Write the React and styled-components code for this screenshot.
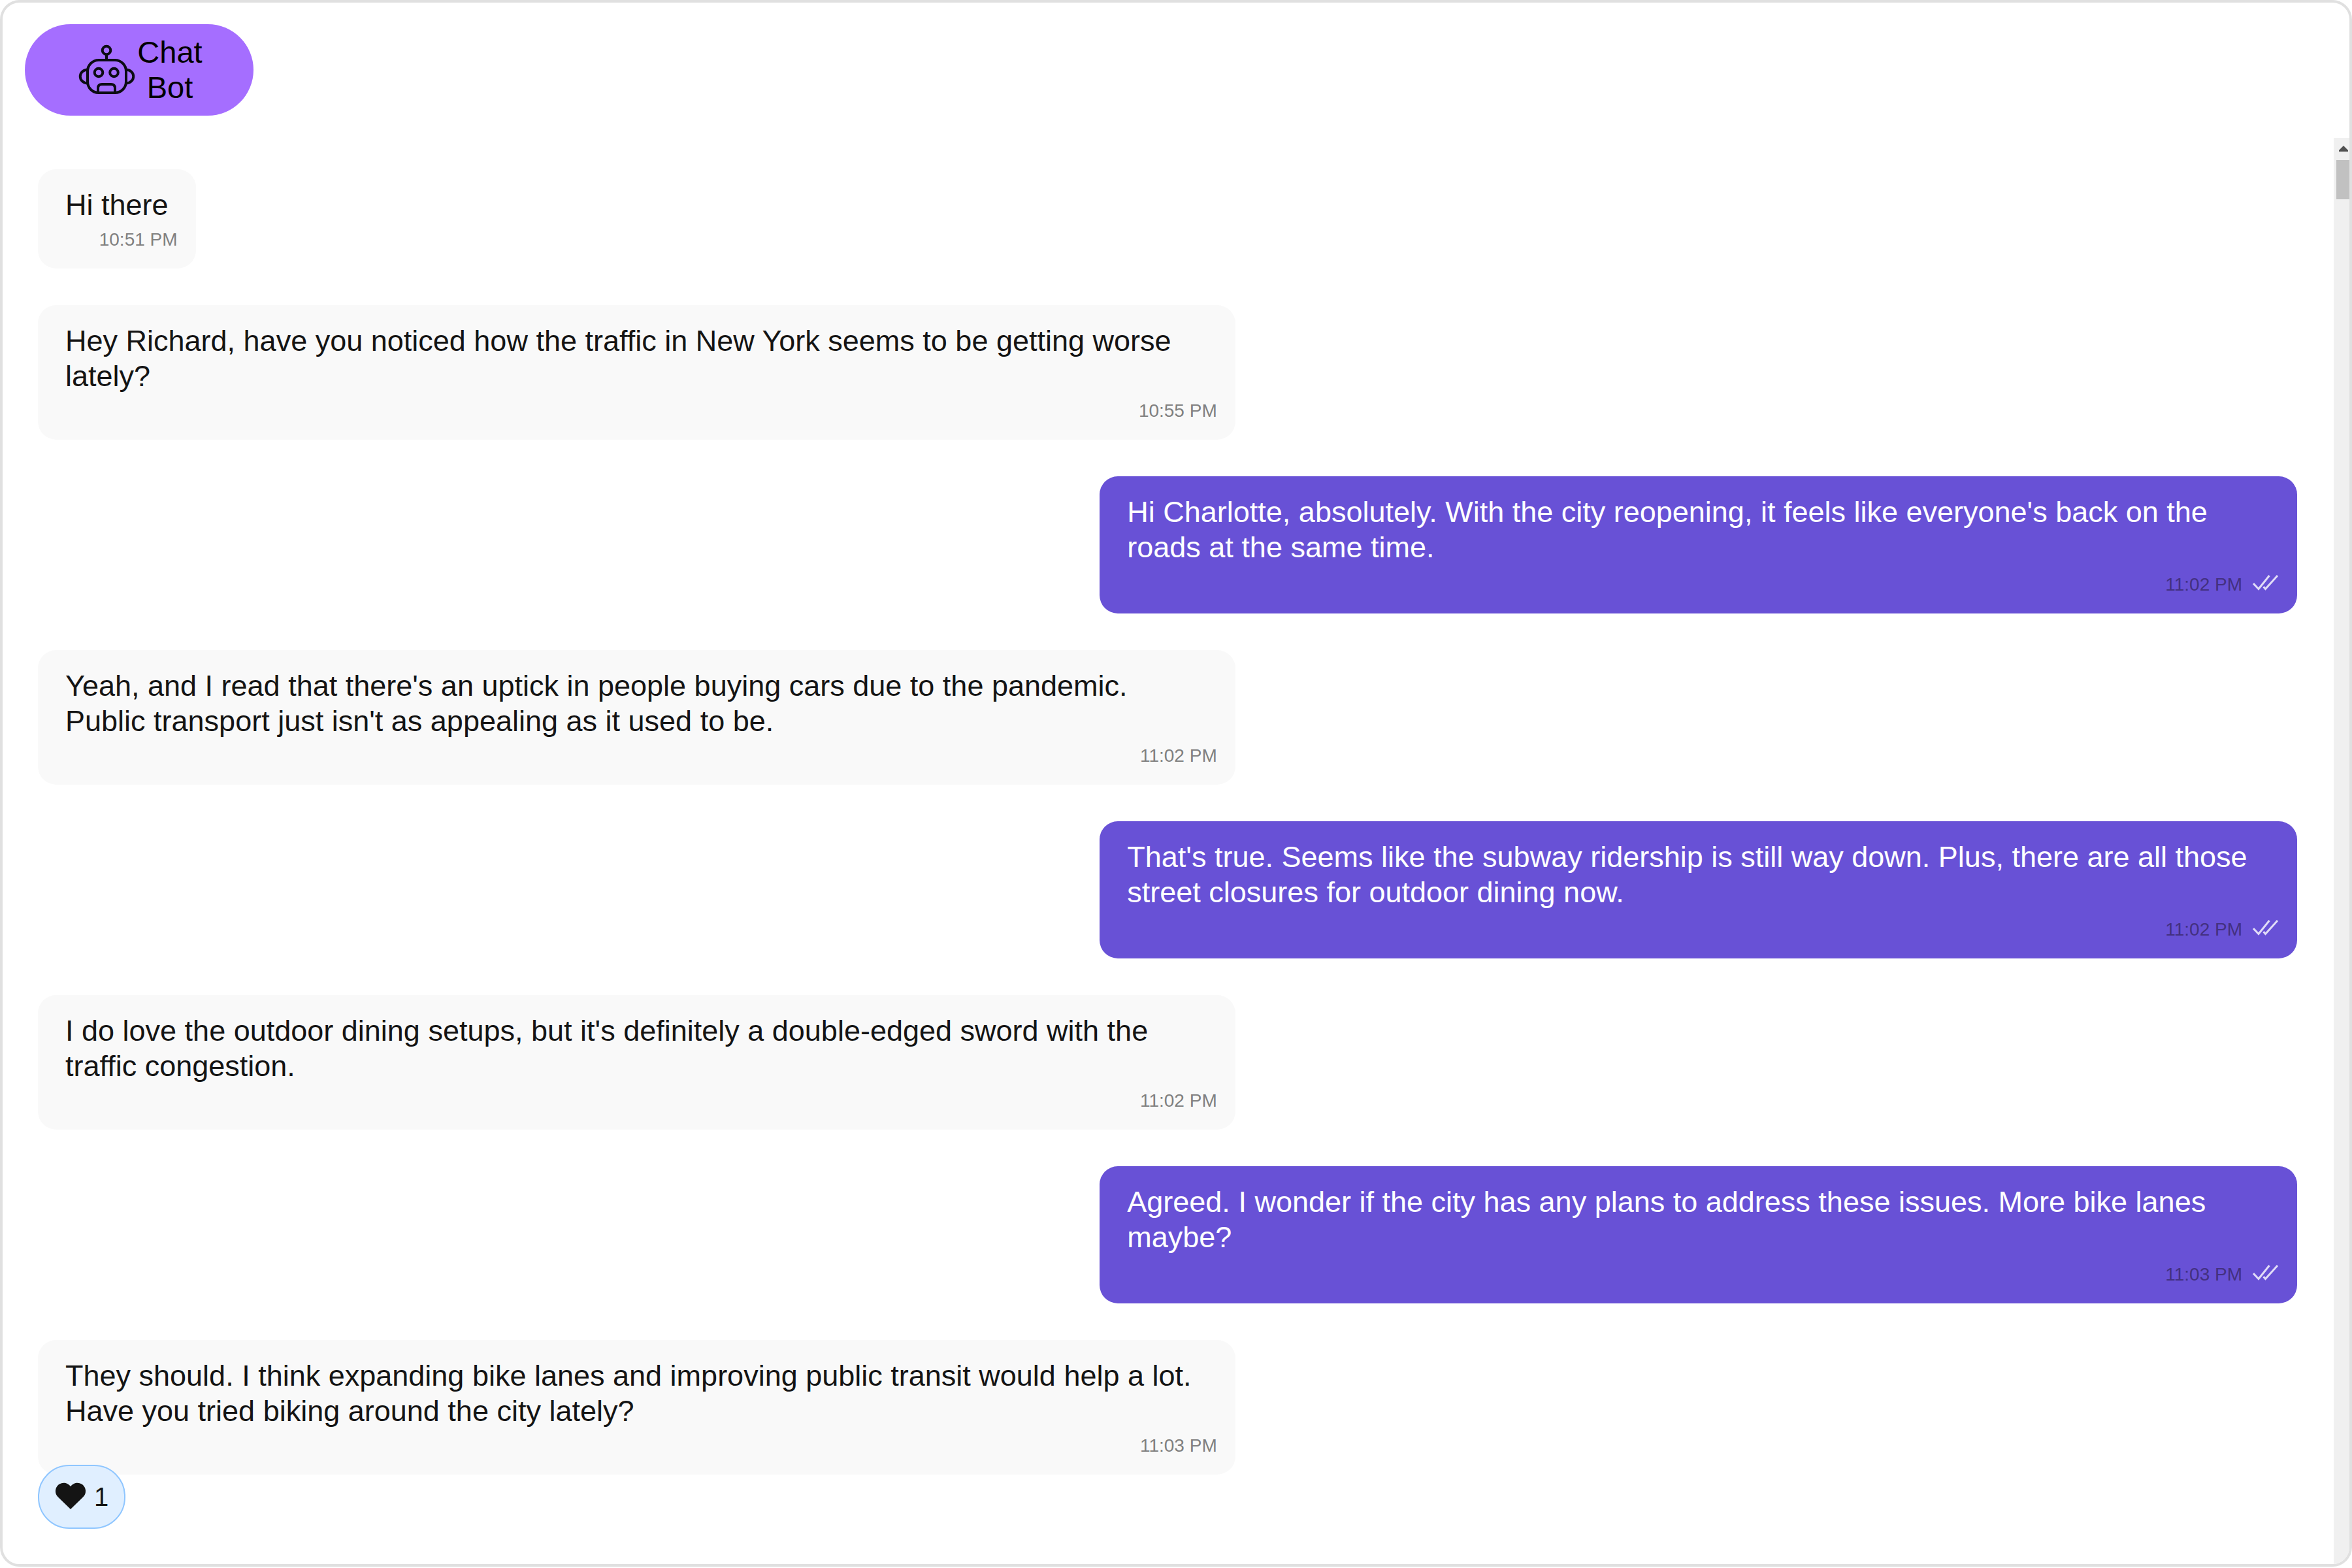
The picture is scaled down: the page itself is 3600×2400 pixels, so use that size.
import React from "react";
import styled, { createGlobalStyle } from "styled-components";

const GlobalStyle = createGlobalStyle`
  *, *::before, *::after { box-sizing: border-box; }
  body {
    margin: 0;
    background: #ffffff;
    font-family: "Liberation Sans", Arial, sans-serif;
  }
`;

const Window = styled.main`
  display: flex;
  flex-direction: column;
  height: calc(100vh - 2px);
  border: 4px solid #e0e0e0;
  border-radius: 30px;
  background: #ffffff;
  overflow: hidden;
`;

const Header = styled.header`
  display: flex;
  flex: none;
  padding: 33px 34px 34px;
`;

const BotButton = styled.button`
  display: flex;
  align-items: center;
  justify-content: center;
  gap: 2px;
  width: 350px;
  padding: 16px 78px 16px 80px;
  border: 0;
  border-radius: 72px;
  background: #a56eff;
  color: #000000;
  font: inherit;
  font-size: 47px;
  line-height: 54px;
  text-align: center;
  cursor: pointer;
`;

const RobotIcon = styled.svg`
  flex: none;
  width: 90px;
  height: 90px;
  fill: none;
  stroke: #0c0c14;
  stroke-width: 4;
`;

const Body = styled.div`
  display: flex;
  flex: 1;
  min-height: 0;
`;

const MessageList = styled.ol`
  display: flex;
  flex: 1;
  flex-direction: column;
  gap: 56px;
  min-width: 0;
  margin: 0;
  padding: 48px 56px 48px 54px;
  list-style: none;
  overflow: hidden;
`;

const MessageItem = styled.li`
  display: flex;
  flex: none;
  flex-direction: column;
  align-items: ${({ $own }) => ($own ? "flex-end" : "flex-start")};
`;

const Bubble = styled.article`
  display: flex;
  flex-direction: column;
  gap: 10px;
  max-width: 53%;
  padding: 28px;
  border-radius: 28px;
  background: ${({ $own }) => ($own ? "#6851d6" : "#f9f9f9")};
  color: ${({ $own }) => ($own ? "#ffffff" : "#141414")};
`;

const MessageText = styled.p`
  margin: 0;
  padding: 0 14px;
  font-size: 45px;
  line-height: 54px;
`;

const Meta = styled.footer`
  display: flex;
  align-items: flex-end;
  justify-content: flex-end;
  gap: 16px;
  height: ${({ $own }) => ($own ? "36px" : "32px")};
`;

const Time = styled.time`
  color: ${({ $own }) => ($own ? "#433080" : "#808080")};
  font-size: 28px;
  line-height: 32px;
`;

const ReadIcon = styled.svg`
  align-self: flex-start;
  width: 40px;
  height: 30px;
  fill: none;
  stroke: #e1dcf7;
  stroke-width: 3;
`;

const Reaction = styled.button`
  display: flex;
  align-items: center;
  gap: 12px;
  height: 98px;
  margin-top: -15px;
  padding: 0 24px;
  border: 2px solid #8fc6ff;
  border-radius: 48px;
  background: #e0efff;
  color: #141414;
  font: inherit;
  font-size: 40px;
  line-height: 46px;
  cursor: pointer;
`;

const HeartIcon = styled.svg`
  flex: none;
  width: 48px;
  height: 44px;
  fill: #141414;
`;

const Scrollbar = styled.div`
  display: flex;
  flex: none;
  flex-direction: column;
  align-items: stretch;
  gap: 12px;
  width: 24px;
  padding: 12px 0 0 4px;
  background: #f0f0f0;
`;

const ScrollArrow = styled.svg`
  width: 14px;
  height: 10px;
  margin-left: 4px;
  fill: #505050;
`;

const ScrollThumb = styled.div`
  height: 60px;
  background: #c1c1c1;
`;

const messages = [
  { text: "Hi there", time: "10:51 PM" },
  {
    text: "Hey Richard, have you noticed how the traffic in New York seems to be getting worse lately?",
    time: "10:55 PM",
  },
  {
    own: true,
    text: "Hi Charlotte, absolutely. With the city reopening, it feels like everyone's back on the roads at the same time.",
    time: "11:02 PM",
  },
  {
    text: "Yeah, and I read that there's an uptick in people buying cars due to the pandemic. Public transport just isn't as appealing as it used to be.",
    time: "11:02 PM",
  },
  {
    own: true,
    text: "That's true. Seems like the subway ridership is still way down. Plus, there are all those street closures for outdoor dining now.",
    time: "11:02 PM",
  },
  {
    text: "I do love the outdoor dining setups, but it's definitely a double-edged sword with the traffic congestion.",
    time: "11:02 PM",
  },
  {
    own: true,
    text: "Agreed. I wonder if the city has any plans to address these issues. More bike lanes maybe?",
    time: "11:03 PM",
  },
  {
    text: "They should. I think expanding bike lanes and improving public transit would help a lot. Have you tried biking around the city lately?",
    time: "11:03 PM",
    likes: 1,
  },
];

function Robot() {
  return (
    <RobotIcon viewBox="0 0 90 90" aria-hidden="true">
      <circle cx="45" cy="15" r="6.300" />
      <path d="M45 21v9" />
      <rect x="16" y="30" width="59" height="50" rx="17" />
      <circle cx="33" cy="49" r="6.300" />
      <circle cx="56.500" cy="49" r="6.300" />
      <path d="M32 80V73q0-6 6-6h14q6 0 6 6v7" />
      <path d="M16 44.500C1 45.500 1 64.500 16 65.500M75 44.500C90 45.500 90 64.500 75 65.500" />
    </RobotIcon>
  );
}

function Message({ text, time, own, likes }) {
  return (
    <MessageItem $own={own}>
      <Bubble $own={own}>
        <MessageText>{text}</MessageText>
        <Meta $own={own}>
          <Time $own={own}>{time}</Time>
          {own && (
            <ReadIcon viewBox="0 0 40 30" aria-label="Read">
              <path d="M1 18l8 8.500L25.500 6M16.500 23l3 3.500L38 6" />
            </ReadIcon>
          )}
        </Meta>
      </Bubble>
      {likes && (
        <Reaction type="button">
          <HeartIcon viewBox="0 0 48 44" aria-hidden="true">
            <path d="M24 41L4.700 22.300A12.600 12.600 0 1 1 24 6.300A12.600 12.600 0 1 1 43.300 22.300Z" />
          </HeartIcon>
          {likes}
        </Reaction>
      )}
    </MessageItem>
  );
}

export default function App() {
  return (
    <>
      <GlobalStyle />
      <Window>
        <Header>
          <BotButton type="button">
            <Robot />
            <span>Chat Bot</span>
          </BotButton>
        </Header>
        <Body>
          <MessageList>
            {messages.map((message) => (
              <Message key={message.text} {...message} />
            ))}
          </MessageList>
          <Scrollbar aria-hidden="true">
            <ScrollArrow viewBox="0 0 14 10">
              <path d="M7 0l7 7v2H0V7z" />
            </ScrollArrow>
            <ScrollThumb />
          </Scrollbar>
        </Body>
      </Window>
    </>
  );
}
